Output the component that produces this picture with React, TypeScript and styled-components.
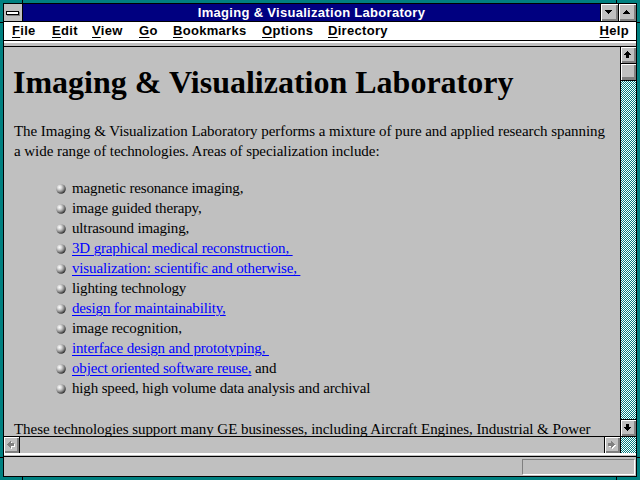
import React from "react";
import styled, { createGlobalStyle } from "styled-components";

const Global = createGlobalStyle`
  html, body { margin: 0; padding: 0; background: #008080; }
  * { box-sizing: border-box; }
`;

const Window = styled.div`
  position: relative;
  width: 640px;
  height: 480px;
  background: #008080;
  padding: 3px;
  display: flex;
`;

const Tick = styled.div<{ $l?: number; $t?: number; $r?: number; $b?: number; $w: number; $h: number }>`
  position: absolute;
  background: #000;
  width: ${(p) => p.$w}px;
  height: ${(p) => p.$h}px;
  ${(p) => (p.$l !== undefined ? `left: ${p.$l}px;` : "")}
  ${(p) => (p.$t !== undefined ? `top: ${p.$t}px;` : "")}
  ${(p) => (p.$r !== undefined ? `right: ${p.$r}px;` : "")}
  ${(p) => (p.$b !== undefined ? `bottom: ${p.$b}px;` : "")}
`;

const Frame = styled.div`
  flex: 1;
  border: 1px solid #000;
  display: flex;
  flex-direction: column;
  background: #c0c0c0;
  overflow: hidden;
  min-width: 0;
`;

const TitleBar = styled.div`
  display: flex;
  height: 18px;
  flex: none;
  border-bottom: 1px solid #000;
`;

const SysBox = styled.div`
  width: 19px;
  border-right: 1px solid #000;
  background: #c0c0c0;
  display: flex;
  align-items: center;
  justify-content: center;
`;

const SysBar = styled.div`
  width: 13px;
  height: 4px;
  background: #fff;
  border: 1px solid #000;
  box-shadow: 1px 1px 0 #808080;
  margin-left: -1px;
`;

const Title = styled.div`
  flex: 1;
  background: #000080;
  color: #fff;
  font: bold 13px "Liberation Sans", Arial, sans-serif;
  letter-spacing: 0.3px;
  text-align: center;
  line-height: 18px;
  white-space: nowrap;
`;

const TitleButton = styled.div`
  width: 18px;
  border-left: 1px solid #000;
  background: #c0c0c0;
  box-shadow: inset 1px 1px 0 #fff, inset -2px -2px 0 #808080;
  display: flex;
  align-items: center;
  justify-content: center;
  padding: 0 1px 1px 0;
`;

const MenuBar = styled.div`
  height: 19px;
  flex: none;
  background: #fff;
  border-bottom: 1px solid #000;
  display: flex;
  align-items: center;
  padding: 0 7px 0 8px;
  font: bold 13px "Liberation Sans", Arial, sans-serif;
  letter-spacing: 0.3px;
  color: #000;
`;

const MenuItem = styled.div<{ $w?: number }>`
  width: ${(p) => (p.$w ? `${p.$w}px` : "auto")};
  white-space: nowrap;
  line-height: 18px;
  &:last-child { margin-left: auto; }
  u { text-decoration-thickness: 1px; text-underline-offset: 2px; }
`;

const Strip = styled.div<{ $h: number }>`
  height: ${(p) => p.$h}px;
  flex: none;
  background: #c0c0c0;
  border-top: 2px solid #fff;
  border-bottom: 1px solid #000;
`;

const Main = styled.div`
  flex: 1;
  display: grid;
  grid-template-columns: minmax(0, 1fr) 16px;
  grid-template-rows: minmax(0, 1fr) 17px;
  min-height: 0;
`;

const Content = styled.div`
  overflow: hidden;
  background: #c0c0c0;
  padding: 17px 0 0 10px;
  font-family: "Liberation Serif", "Times New Roman", serif;
  color: #000;
`;

const H1 = styled.h1`
  margin: 0 0 0 -1px;
  font-size: 32px;
  line-height: 36px;
  font-weight: bold;
  white-space: nowrap;
`;

const Para = styled.p<{ $mt: number }>`
  margin: ${(p) => p.$mt}px 0 0;
  font-size: 15px;
  letter-spacing: -0.05px;
  line-height: 20px;
  white-space: nowrap;
`;

const List = styled.ul`
  list-style: none;
  margin: 17px 0 0 42px;
  padding: 0;
  font-size: 15px;
  letter-spacing: -0.15px;
  line-height: 20px;
`;

const Item = styled.li`
  display: flex;
  align-items: center;
  gap: 6px;
  height: 20px;
  white-space: nowrap;
`;

const BallSvg = styled.svg`
  flex: none;
  margin-top: 2px;
`;

const Link = styled.a`
  color: #0000ff;
  text-decoration: underline;
  text-decoration-thickness: 1px;
  text-underline-offset: 2px;
`;

const VScroll = styled.div`
  border-left: 1px solid #000;
  display: flex;
  flex-direction: column;
  min-height: 0;
`;

const ScrollButton = styled.div<{ $edge: "top" | "bottom" | "left" | "right" }>`
  flex: none;
  background: #c0c0c0;
  box-shadow: inset 1px 1px 0 #fff, inset -2px -2px 0 #808080;
  display: flex;
  align-items: center;
  justify-content: center;
  padding: 0 1px 1px 0;
  ${(p) =>
    p.$edge === "top" || p.$edge === "bottom"
      ? `height: 17px; border-${p.$edge === "top" ? "bottom" : "top"}: 1px solid #000;`
      : `width: 16px; border-${p.$edge === "left" ? "right" : "left"}: 1px solid #000;`}
`;

const Thumb = styled.div`
  flex: none;
  height: 17px;
  background: #c0c0c0;
  border-bottom: 1px solid #000;
  box-shadow: inset 1px 1px 0 #fff, inset -2px -3px 0 #808080;
`;

const Trough = styled.div<{ $checker?: boolean }>`
  flex: 1;
  background: ${(p) =>
    p.$checker
      ? "repeating-conic-gradient(#008080 0 25%, #ffffff 0 50%) 0 0 / 2px 2px"
      : "#c0c0c0"};
`;

const HScroll = styled.div`
  border-top: 1px solid #000;
  display: flex;
`;

const Corner = styled.div`
  border-top: 1px solid #000;
  border-left: 1px solid #000;
  background: repeating-conic-gradient(#008080 0 25%, #ffffff 0 50%) 0 0 / 2px 2px;
`;

const StatusBar = styled.div`
  flex: none;
  height: 19px;
  display: flex;
  justify-content: flex-end;
  padding: 2px 1px 0 0;
  background: #c0c0c0;
`;

const StatusBox = styled.div`
  width: 113px;
  height: 16px;
  border-top: 1px solid #808080;
  border-left: 1px solid #808080;
  border-bottom: 1px solid #fff;
  border-right: 1px solid #fff;
`;

const ARROWS: Record<string, string> = {
  up: "M3 0h1v1H3z M2 1h3v1H2z M1 2h5v1H1z M0 3h7v1H0z M2 4h3v3H2z",
  down: "M2 0h3v3H2z M0 3h7v1H0z M1 4h5v1H1z M2 5h3v1H2z M3 6h1v1H3z",
  left: "M0 3h1v1H0z M1 2h1v3H1z M2 1h1v5H2z M3 0h1v7H3z M4 2h3v3H4z",
  right: "M0 2h3v3H0z M3 0h1v7H3z M4 1h1v5H4z M5 2h1v3H5z M6 3h1v1H6z",
  triDown: "M0 0h7v1H0z M1 1h5v1H1z M2 2h3v1H2z M3 3h1v1H3z",
  triUp: "M3 0h1v1H3z M2 1h3v1H2z M1 2h5v1H1z M0 3h7v1H0z",
};

const Arrow = ({ dir, disabled, h = 7 }: { dir: string; disabled?: boolean; h?: number }) => (
  <svg width={8} height={h + 1} viewBox={`0 0 8 ${h + 1}`} shapeRendering="crispEdges">
    {disabled && <path d={ARROWS[dir]} fill="#fff" transform="translate(1 1)" />}
    <path d={ARROWS[dir]} fill={disabled ? "#808080" : "#000"} />
  </svg>
);

const Ball = () => (
  <BallSvg width={10} height={10} viewBox="0 0 10 10">
    <defs>
      <radialGradient id="ballg" cx="35%" cy="32%" r="70%">
        <stop offset="0%" stopColor="#ffffff" />
        <stop offset="30%" stopColor="#d8d8d8" />
        <stop offset="65%" stopColor="#909090" />
        <stop offset="100%" stopColor="#303030" />
      </radialGradient>
    </defs>
    <circle cx="5" cy="5" r="4.8" fill="url(#ballg)" />
  </BallSvg>
);

const menu: { label: string; w?: number }[] = [
  { label: "File", w: 40 },
  { label: "Edit", w: 40 },
  { label: "View", w: 47 },
  { label: "Go", w: 34 },
  { label: "Bookmarks", w: 89 },
  { label: "Options", w: 66 },
  { label: "Directory" },
  { label: "Help" },
];

type Entry = { text: string; link?: boolean; after?: string };

const items: Entry[] = [
  { text: "magnetic resonance imaging," },
  { text: "image guided therapy," },
  { text: "ultrasound imaging," },
  { text: "3D graphical medical reconstruction,\u00a0", link: true },
  { text: "visualization: scientific and otherwise,\u00a0", link: true },
  { text: "lighting technology" },
  { text: "design for maintainability,", link: true },
  { text: "image recognition," },
  { text: "interface design and prototyping,\u00a0", link: true },
  { text: "object oriented software reuse,", link: true, after: " and" },
  { text: "high speed, high volume data analysis and archival" },
];

export default function App() {
  return (
    <>
      <Global />
      <Window>
        <Tick $l={22} $t={0} $w={1} $h={3} />
        <Tick $l={616} $t={0} $w={1} $h={3} />
        <Tick $l={22} $b={0} $w={1} $h={3} />
        <Tick $l={616} $b={0} $w={1} $h={3} />
        <Tick $l={0} $t={22} $w={3} $h={1} />
        <Tick $l={0} $t={457} $w={3} $h={1} />
        <Tick $r={0} $t={22} $w={3} $h={1} />
        <Tick $r={0} $t={457} $w={3} $h={1} />
        <Frame>
          <TitleBar>
            <SysBox>
              <SysBar />
            </SysBox>
            <Title>Imaging &amp; Visualization Laboratory</Title>
            <TitleButton>
              <Arrow dir="triDown" h={4} />
            </TitleButton>
            <TitleButton>
              <Arrow dir="triUp" h={4} />
            </TitleButton>
          </TitleBar>
          <MenuBar>
            {menu.map((m) => (
              <MenuItem key={m.label} $w={m.w}>
                <u>{m.label[0]}</u>
                {m.label.slice(1)}
              </MenuItem>
            ))}
          </MenuBar>
          <Strip $h={6} />
          <Main>
            <Content>
              <H1>Imaging &amp; Visualization Laboratory</H1>
              <Para $mt={21}>
                The Imaging &amp; Visualization Laboratory performs a mixture of pure and applied research spanning
                <br />
                a wide range of technologies. Areas of specialization include:
              </Para>
              <List>
                {items.map((it) => (
                  <Item key={it.text}>
                    <Ball />
                    <span>
                      {it.link ? <Link href="#">{it.text}</Link> : it.text}
                      {it.after}
                    </span>
                  </Item>
                ))}
              </List>
              <Para $mt={21}>
                These technologies support many GE businesses, including Aircraft Engines, Industrial &amp; Power
              </Para>
            </Content>
            <VScroll>
              <ScrollButton $edge="top">
                <Arrow dir="up" />
              </ScrollButton>
              <Thumb />
              <Trough $checker />
              <ScrollButton $edge="bottom">
                <Arrow dir="down" />
              </ScrollButton>
            </VScroll>
            <HScroll>
              <ScrollButton $edge="left">
                <Arrow dir="left" disabled />
              </ScrollButton>
              <Trough />
              <ScrollButton $edge="right">
                <Arrow dir="right" disabled />
              </ScrollButton>
            </HScroll>
            <Corner />
          </Main>
          <Strip $h={4} />
          <StatusBar>
            <StatusBox />
          </StatusBar>
        </Frame>
      </Window>
    </>
  );
}
